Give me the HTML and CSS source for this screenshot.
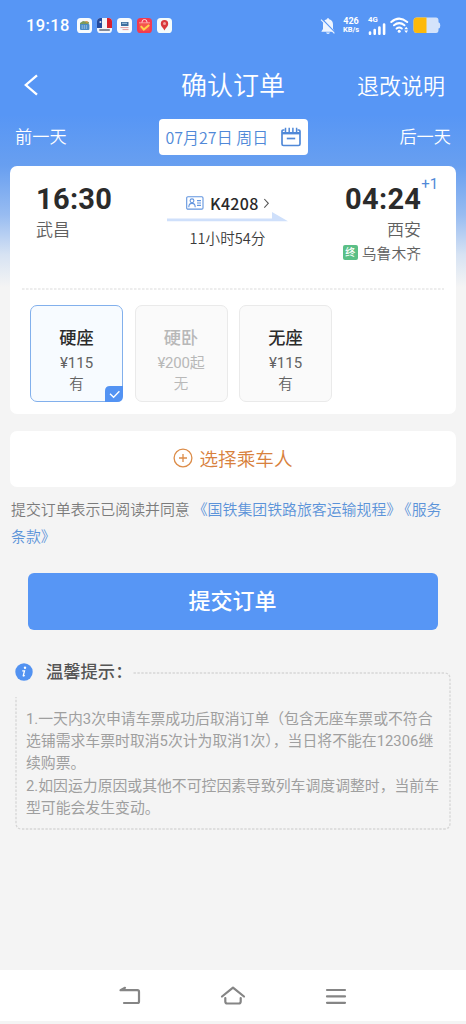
FILE: index.html
```html
<!DOCTYPE html>
<html lang="zh-CN">
<head>
<meta charset="utf-8">
<title>确认订单</title>
<link rel="stylesheet" href="styles.css">
</head>
<body>
<div class="screen">
  <header class="status">
    <span class="clock">19:18</span>
    <div class="apps">
      <svg width="15" height="15" viewBox="0 0 15 15"><rect width="15" height="15" rx="3.6" fill="#f8fbfd"/><path d="M3 5l3-2 6 1-.5 3H3z" fill="#7a9a5c"/><path d="M8 3l3 .5-1 2z" fill="#d9933f"/><rect x="3" y="6" width="9.4" height="6" rx="1" fill="#4a8bc4"/><path d="M4.6 8h6M4.6 10h6" stroke="#bcd9ee" stroke-width="1" stroke-dasharray="1.3 .8"/></svg>
      <svg width="15" height="15" viewBox="0 0 15 15"><rect width="15" height="15" rx="3.6" fill="#f2f5fa"/><path d="M3.6 0H5v10H0V3.600Q0 0 3.600 0z" fill="#244a9b"/><path d="M10 0h1.400Q15 0 15 3.600V10h-5z" fill="#d8202c"/><circle cx="3.400" cy="4" r="1" fill="#dbe5f5"/><path d="M2.300 12h10.500" stroke="#465064" stroke-width="1.300"/></svg>
      <svg width="15" height="15" viewBox="0 0 15 15"><rect width="15" height="15" rx="3.6" fill="#f8fbfd"/><rect x="4" y="4" width="7.500" height="4" fill="#3e6f9e"/><path d="M5 5.300h5" stroke="#a8c7e2"/><path d="M3.500 9.600h8M5.500 11.600h6" stroke="#e19a9d" stroke-width="1"/></svg>
      <svg width="15" height="15" viewBox="0 0 15 15"><rect width="15" height="15" rx="3.6" fill="#f23b50"/><path d="M5 5V4q0-2.500 2.500-2.500T10 4v1" fill="none" stroke="#ffd7d5" stroke-width="1"/><path d="M2 4.800h11l-.6 8H2.600z" fill="#f5544c"/><path d="M2 4.800h11" stroke="#ffb3b0" stroke-width=".8"/><path d="M3.800 8.200l3 3.300 5.400-4.500" fill="none" stroke="#ffd24a" stroke-width="2"/></svg>
      <svg width="15" height="15" viewBox="0 0 15 15"><rect width="15" height="15" rx="3.6" fill="#f4fbfb"/><path d="M7.500 12.500C6.500 10 3.800 8.600 3.800 5.700a3.700 3.700 0 017.400 0c0 2.900-2.700 4.300-3.700 6.800z" fill="#d93a3d"/><circle cx="7.500" cy="5.600" r="1.500" fill="#f0a5a2"/></svg>
    </div>
    <div class="indicators">
      <svg width="16" height="18" viewBox="0 0 16 18"><path d="M8 1.200c.8 0 1.200.5 1.200 1.100C12 3 13 5 13 7.500V12l1.500 2.200v.6h-13v-.6L3 12V7.500C3 5 4 3 6.800 2.300c0-.6.4-1.100 1.200-1.100zM6 15.600h4Q9.600 17 8 17t-2-1.400z" fill="#eef5ff"/><path d="M1.800 1.800L15 15.400" stroke="#5796f5" stroke-width="1.300"/><path d="M1 2.600L14.400 16.400" stroke="#eef5ff" stroke-width="1.100"/></svg>
      <div class="rate"><span>426</span><span>KB/s</span></div>
      <div class="cell"><span>4G</span>
        <svg width="18" height="12" viewBox="0 0 18 12"><path d="M2 9.500V10.800M6.700 7V10.800M11.400 4.500V10.800M16.100 1.500V10.800" stroke="#fff" stroke-width="2.600" stroke-linecap="round"/></svg>
      </div>
      <svg class="wifi" width="19" height="17" viewBox="0 0 19 17"><g fill="none" stroke="#fff" stroke-width="2" stroke-linecap="round"><path d="M1.300 5Q9 -1.800 17.200 5"/><path d="M4 8.300Q9.200 4 14.500 8.300"/><path d="M6.600 11.500Q9.200 9.400 11.800 11.500"/></g><circle cx="9.200" cy="14.300" r="1.500" fill="#fff"/><path d="M14.300 12.200l1.900-2.400 1.900 2.400zM14.300 13.600h3.800l-1.900 2.400z" fill="#fff"/></svg>
      <svg class="battery" width="28" height="17" viewBox="0 0 28 17"><path d="M4 .5h19q2.500 0 2.500 3v1.700q1.800.5 1.800 3.200t-1.800 3.200V13q0 3-2.500 3H4Q.5 16 .5 12.500V4Q.5.500 4 .500z" fill="#d4e3fb"/><path d="M4 .5h9.500V16H4Q.5 16 .5 12.500V4Q.5.500 4 .500z" fill="#fdb90b"/></svg>
    </div>
  </header>

  <nav class="titlebar">
    <svg class="back" width="16" height="22" viewBox="0 0 16 22"><path d="M14 1.300L2.800 11 14 20.700" fill="none" stroke="#fff" stroke-width="2.300"/></svg>
    <h1>确认订单</h1>
    <a class="policy">退改说明</a>
  </nav>

  <div class="days">
    <span>前一天</span>
    <div class="date"><span>07月27日 周日</span>
      <svg width="20" height="20" viewBox="0 0 20 20"><path d="M3.500 3H2.200Q1 3 1 4.200V17q0 1.500 1.500 1.500h15Q19 18.500 19 17V4.200Q19 3 17.800 3h-1.300" fill="none" stroke="#5089d8" stroke-width="1.700"/><path d="M1 6.200h18" stroke="#5089d8" stroke-width="2.400"/><path d="M4.500.8V5M8.200.8V5M11.900.8V5M15.600.8V5" stroke="#5089d8" stroke-width="1.500"/><path d="M5.800 11.500h8.400" stroke="#5089d8" stroke-width="1.700"/></svg>
    </div>
    <span>后一天</span>
  </div>

  <section class="card trip">
    <div class="route">
      <div class="from">
        <div class="time">16:30</div>
        <div class="station">武昌</div>
      </div>
      <div class="train">
        <div class="number">
          <svg width="18" height="14" viewBox="0 0 18 14"><g fill="none" stroke="#6295df" stroke-width="1.100"><rect x=".7" y=".7" width="16.300" height="12.400" rx="1.200"/><circle cx="6" cy="4.800" r="1.900"/><path d="M2.800 11.200q0-3.800 3.200-3.800t3.200 3.800"/><path d="M11 4.600h4M11 7h4M11 9.400h4"/></g></svg>
          <b>K4208</b>
          <svg width="7" height="11" viewBox="0 0 7 11"><path d="M1.300 1l4 4.300-4 4.300" fill="none" stroke="#555" stroke-width="1.100"/></svg>
        </div>
        <svg class="arrow" width="121" height="10" viewBox="0 0 121 10"><path d="M0 6.500h105V0l16 9.200H0z" fill="#cfe0fb"/></svg>
        <div class="duration">11小时54分</div>
      </div>
      <div class="to">
        <div class="time">04:24<sup>+1</sup></div>
        <div class="station">西安</div>
        <div class="terminus"><i>终</i><span>乌鲁木齐</span></div>
      </div>
    </div>
    <svg class="rule" width="422" height="2" viewBox="0 0 422 2"><path d="M0 1h422" stroke="#dcdcdc" stroke-width="1.200" stroke-dasharray="2.600 1.400"/></svg>
    <div class="seats">
      <div class="seat selected">
        <b>硬座</b><span class="price">¥115</span><span>有</span>
        <svg class="tick" width="18" height="16" viewBox="0 0 18 16"><path d="M0 16V5Q0 0 5 0h13v10q0 6-6 6z" fill="#5393f3"/><path d="M5 7.700l3.600 3.600 5.800-6.100" fill="none" stroke="#fff" stroke-width="1.300"/></svg>
      </div>
      <div class="seat disabled"><b>硬卧</b><span class="price">¥200起</span><span>无</span></div>
      <div class="seat"><b>无座</b><span class="price">¥115</span><span>有</span></div>
    </div>
  </section>

  <section class="card passenger">
    <svg width="20" height="20" viewBox="0 0 20 20"><g fill="none" stroke="#dc8c48" stroke-width="1.300"><circle cx="10" cy="10" r="8.900"/><path d="M6 10h8M10 6v8"/></g></svg>
    <span>选择乘车人</span>
  </section>

  <p class="agreement">提交订单表示已阅读并同意<a class="terms">《国铁集团铁路旅客运输规程》</a><a class="service">《服务<br>条款》</a></p>

  <button class="submit">提交订单</button>

  <section class="tips">
    <div class="tips-head">
      <svg width="18" height="18" viewBox="0 0 18 18"><circle cx="9" cy="9" r="8.700" fill="#5292f1"/><circle cx="10" cy="4.700" r="1.200" fill="#fff"/><path d="M7.200 7.800h2.300l-1.300 5q0 .5 1.700-.3" fill="none" stroke="#fff" stroke-width="1.300"/></svg>
      <h2>温馨提示：</h2>
    </div>
    <svg class="frame" width="437" height="160" viewBox="0 0 437 160"><path d="M118.500 2H429q6 0 6 6v144q0 6-6 6H7q-6 0-6-6V26" fill="none" stroke="#d6d6d6" stroke-width="1.300" stroke-dasharray="2.400 1.500"/></svg>
    <p>1.一天内3次申请车票成功后取消订单（包含无座车票或不符合<br>选铺需求车票时取消5次计为取消1次），当日将不能在12306继<br>续购票。<br>2.如因运力原因或其他不可控因素导致列车调度调整时，当前车<br>型可能会发生变动。</p>
  </section>

  <footer class="system">
    <svg width="22" height="20" viewBox="0 0 22 20"><g fill="none" stroke="#858585" stroke-width="2.200" stroke-linecap="round" stroke-linejoin="round"><path d="M6 1.800L1.500 4.200H18.500Q20 4.200 20 5.700V15.500Q20 17 18.500 17H5"/></g></svg>
    <svg width="26" height="20" viewBox="0 0 26 20"><g fill="none" stroke="#858585" stroke-width="2.200" stroke-linecap="round" stroke-linejoin="round"><path d="M2 10.500L13 1.600l11 8.900"/><path d="M5.300 12v3.500Q5.300 17.500 7.300 17.500H18.700Q20.700 17.500 20.700 15.500V12"/></g></svg>
    <svg width="22" height="20" viewBox="0 0 22 20"><path d="M2 4h18M2 10.400h18M2 16.800h18" stroke="#858585" stroke-width="2.200" stroke-linecap="round"/></svg>
  </footer>
</div>
</body>
</html>
```
FILE: styles.css
```css
* { box-sizing: border-box; }
body {
  margin: 0;
  font-family: "Noto Sans CJK SC", sans-serif;
  font-weight: 350;
  background: #f4f4f4;
}
svg { display: block; flex: none; }
h1, h2, p { margin: 0; }
.screen {
  width: 466px;
  height: 1024px;
  display: flex;
  flex-direction: column;
  overflow: hidden;
  white-space: nowrap;
  background: linear-gradient(#5796f5 0, #5796f5 115px, #689ff0 166px, #98bcf1 215px, #d7e3f3 255px, #f4f4f4 287px);
}
.status {
  height: 51px;
  padding: 0 25px 0 26px;
  display: flex;
  align-items: center;
  color: #fff;
  font-family: Roboto, sans-serif;
}
.clock { width: 51px; font-size: 16.5px; font-weight: 500; letter-spacing: .4px; }
.apps { display: flex; gap: 5px; }
.indicators { margin-left: auto; display: flex; align-items: center; }
.rate {
  width: 18px;
  margin: 0 8px 0 6px;
  display: flex;
  flex-direction: column;
  align-items: center;
  font-size: 9px;
  line-height: 8.5px;
  font-weight: 700;
}
.rate span:last-child { font-size: 7.500px; }
.cell { font-size: 7.800px; line-height: 6px; font-weight: 700; margin-right: 4px; }
.battery { margin-left: 4px; }

.titlebar {
  height: 67px;
  padding: 0 21px 0 23px;
  display: grid;
  grid-template-columns: 100px 1fr 100px;
  align-items: center;
  color: #fff;
}
.titlebar h1 { padding: 0 2px 1px 0; font-size: 26px; line-height: 34px; font-weight: inherit; text-align: center; }
.policy { padding-bottom: 2px; font-size: 22px; line-height: 30px; text-align: right; }

.days {
  height: 37px;
  padding: 0 15px;
  display: flex;
  align-items: center;
  justify-content: space-between;
  color: #fff;
  font-size: 17.200px;
}
.days > span { padding-bottom: 2px; }
.date {
  width: 149px;
  height: 36px;
  padding: 0 7px;
  display: flex;
  align-items: center;
  justify-content: space-between;
  background: #fff;
  border-radius: 4px;
  color: #5089d8;
  font-size: 16px;
}

.card { margin: 0 10px; background: #fff; border-radius: 7px; }
.trip { margin-top: 11px; height: 248px; }
.route {
  height: 122px;
  padding: 16px 35px 0 26px;
  display: grid;
  grid-template-columns: 131px 121px 1fr;
}
.time {
  position: relative;
  font: 700 29px/34px Roboto, sans-serif;
  letter-spacing: .3px;
  margin-right: -.3px;
  color: #2b2b2b;
}
.time sup {
  position: absolute;
  left: 100%;
  top: -8px;
  font-size: 15px;
  line-height: 20px;
  font-weight: 400;
  letter-spacing: 0;
  color: #5089d8;
}
.station { font-size: 17px; line-height: 25px; color: #606060; }
.train { padding-top: 11px; }
.number {
  height: 20px;
  padding-left: 19px;
  display: flex;
  align-items: center;
  gap: 4px;
}
.number b { width: 49px; margin-left: 2px; font-size: 16px; line-height: 20px; font-weight: 500; color: #292929; letter-spacing: .3px; }
.arrow { margin-top: -1px; }
.duration { margin-top: 5px; font-size: 14.600px; line-height: 22px; text-align: center; color: #3a3a3a; }
.to { text-align: right; }
.terminus { display: flex; align-items: center; justify-content: flex-end; gap: 4px; font-size: 14.800px; line-height: 23px; color: #606060; }
.terminus i {
  width: 15px;
  height: 15px;
  border-radius: 2px;
  background: #5bbf86;
  color: #fff;
  font-size: 10px;
  line-height: 14px;
  font-style: normal;
  font-weight: 500;
  text-align: center;
}
.rule { margin-left: 12px; }
.seats { display: flex; gap: 11.500px; padding: 15px 20px; }
.seat {
  position: relative;
  width: 93px;
  height: 97px;
  padding-top: 19px;
  display: flex;
  flex-direction: column;
  align-items: center;
  border: 1px solid #eaeaea;
  border-radius: 7px;
  background: #fafafa;
  color: #626262;
  font-size: 14.500px;
  line-height: 20px;
}
.seat b { font-size: 17.200px; line-height: 24px; font-weight: 500; color: #2b2b2b; }
.seat .price { font: 15px/21px Roboto, "Noto Sans CJK SC", sans-serif; margin-top: 4px; margin-bottom: -1px; }
.seat.disabled .price { letter-spacing: -.2px; }
.seat.selected { border-color: #82b0ec; background: #f7fbff; }
.seat.disabled, .seat.disabled b { color: #b8b8b8; }
.tick { position: absolute; right: -1px; bottom: -1px; }

.passenger {
  margin-top: 17px;
  height: 56px;
  padding: 0 1px 2px 0;
  display: flex;
  align-items: center;
  justify-content: center;
  gap: 7px;
  color: #d8813d;
  font-size: 18.600px;
  line-height: 28px;
}
.agreement { margin: 8px 0 0 11px; font-size: 14.900px; line-height: 27px; color: #7b7b7b; }
.agreement a { color: #5b93d9; }
.terms, .service { margin-left: 3px; }
.submit {
  flex: none;
  width: 410px;
  height: 57px;
  margin: 24px 0 0 28px;
  padding: 0 1px 5px 0;
  border: 0;
  border-radius: 6px;
  background: #5796f5;
  color: #fff;
  font: 500 22px/30px "Noto Sans CJK SC", sans-serif;
}
.tips { display: grid; grid-template-columns: 15px 435px; margin-top: 28px; height: 174px; }
.tips-head { grid-area: 1 / 1 / 2 / 3; display: flex; gap: 13px; padding-left: 15px; height: 28px; align-items: center; }
.tips h2 { padding-bottom: 2px; font-size: 17.300px; line-height: 28px; font-weight: 500; color: #555; }
.frame { grid-area: 1 / 2; margin-top: 13px; }
.tips p {
  grid-area: 1 / 2;
  padding: 50px 0 0 11px;
  font: 400 14.850px/22.200px Roboto, "Noto Sans CJK SC", sans-serif;
  color: #9f9f9f;
}
.system {
  height: 51px;
  margin-top: auto;
  margin-bottom: 3px;
  padding: 0 119px 0 119px;
  display: flex;
  align-items: center;
  justify-content: space-between;
  background: #fff;
}
```
